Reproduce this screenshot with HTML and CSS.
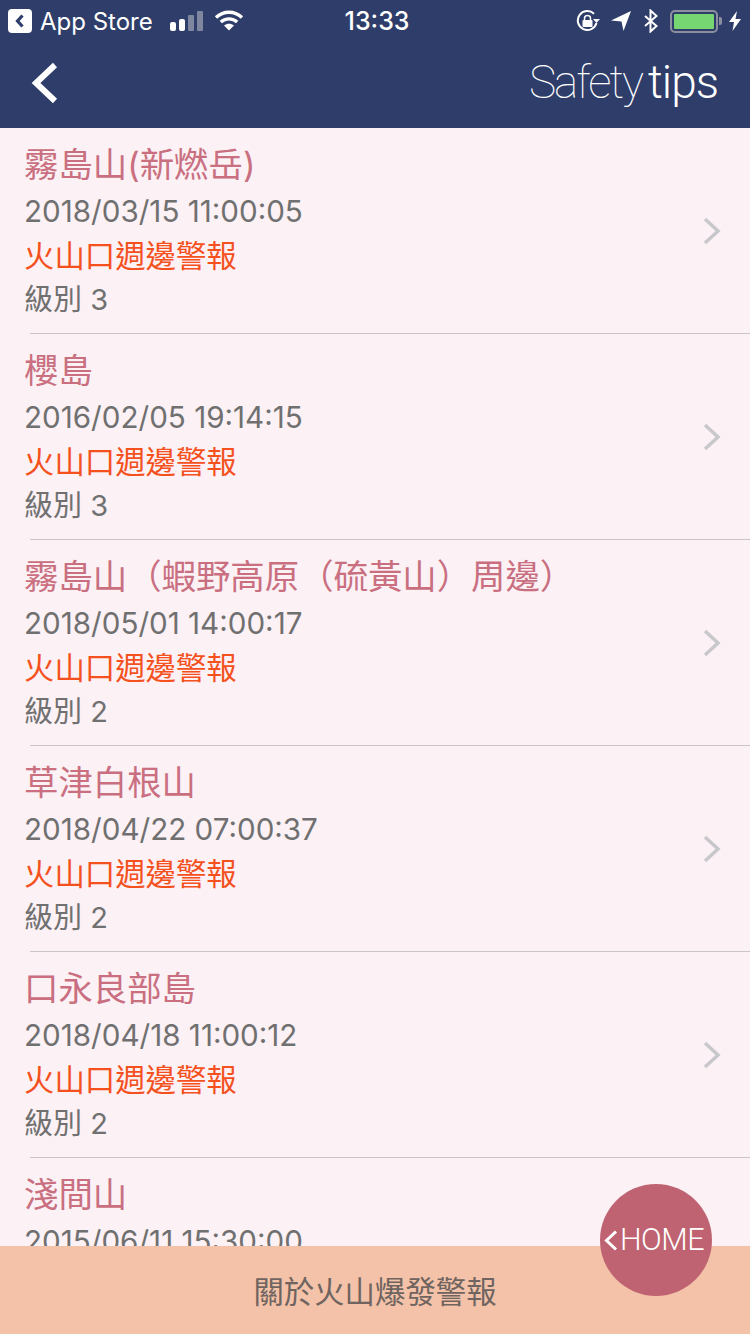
FILE: index.html
```html
<!DOCTYPE html>
<html lang="zh-Hant">
<head>
    <meta charset="UTF-8">
    <meta name="viewport" content="width=device-width, initial-scale=1.0">
    <title>Safety tips</title>
    <link rel="stylesheet" href="styles.css">
</head>
<body>
    <div class="app">
        <header class="top">
            <div class="status-bar">
                <div class="status-left">
                    <svg class="back-app" width="24" height="24" viewBox="0 0 24 24"><rect width="24" height="24" rx="4" fill="#fff"/><path d="M14.500 6.500 9.500 12l5 5.500" fill="none" stroke="#2e3d69" stroke-width="3.200"/></svg>
                    <span class="app-store">App Store</span>
                    <svg class="signal" width="33" height="20" viewBox="0 0 33 20">
                        <rect x="0" y="11" width="6" height="9" rx="2" fill="#fff"/>
                        <rect x="9" y="8" width="6" height="12" rx="2" fill="#fff"/>
                        <rect x="18" y="4" width="6" height="16" rx="1" fill="#7f87a0"/>
                        <rect x="27" y="0" width="6" height="20" rx="1" fill="#7f87a0"/>
                    </svg>
                    <svg class="wifi" width="30" height="22" viewBox="0 0 30 22">
                        <path d="M2 8.500C9.500 1.500 20.500 1.500 28 8.500" fill="none" stroke="#fff" stroke-width="3.400"/>
                        <path d="M6.800 13C11.500 8.800 18.500 8.800 23.200 13" fill="none" stroke="#fff" stroke-width="3.400"/>
                        <path d="M10 16.500C13 14 17 14 20 16.500L15 21.500Z" fill="#fff"/>
                    </svg>
                </div>
                <div class="clock">13:33</div>
                <div class="status-right">
                    <svg class="lock-icon" width="24" height="24" viewBox="0 0 24 24">
                        <path d="M20.500 14A9.500 9.500 0 1 1 18 4.800" fill="none" stroke="#fff" stroke-width="2"/>
                        <path d="M17 10h7l-3.500 4z" fill="#fff"/>
                        <rect x="6.500" y="11" width="10" height="7" rx="1" fill="#fff"/>
                        <path d="M8.500 11.500V9.500a3 3 0 0 1 6 0v2" fill="none" stroke="#fff" stroke-width="1.500"/>
                    </svg>
                    <svg class="arrow-icon" width="20" height="20" viewBox="0 0 20 20"><path d="M0 9.500 20 0 12.500 20 10.500 10.500Z" fill="#fff"/></svg>
                    <svg class="bt-icon" width="16" height="24" viewBox="0 0 16 24"><path d="M2 7 13.500 17 7.500 22.500V1.500L13.500 7 2 17" fill="none" stroke="#fff" stroke-width="2"/></svg>
                    <div class="battery"><div class="battery-fill"></div></div>
                    <div class="battery-tip"></div>
                    <svg class="bolt-icon" width="12" height="20" viewBox="0 0 12 20"><path d="M8 0 0 11h5L3.500 20 12 8H6.500Z" fill="#fff"/></svg>
                </div>
            </div>
            <div class="nav-bar">
                <svg class="nav-back" width="28" height="42" viewBox="0 0 28 42"><path d="M25 3 6 21l19 18" fill="none" stroke="#fff" stroke-width="6"/></svg>
                <div class="nav-title"><span class="thin">Safety</span><span class="light">tips</span></div>
            </div>
        </header>

        <div class="list">
            <div class="row">
                <div class="row-text">
                    <div class="name">霧島山(新燃岳)</div>
                    <div class="date">2018/03/15 11:00:05</div>
                    <div class="alert">火山口週邊警報</div>
                    <div class="level">級別 3</div>
                </div>
                <svg class="chevron" width="20" height="28" viewBox="0 0 20 28"><path d="M3 2l13 12L3 26" fill="none" stroke="#c8c8cc" stroke-width="3.500"/></svg>
            </div>
            <div class="row">
                <div class="row-text">
                    <div class="name">櫻島</div>
                    <div class="date">2016/02/05 19:14:15</div>
                    <div class="alert">火山口週邊警報</div>
                    <div class="level">級別 3</div>
                </div>
                <svg class="chevron" width="20" height="28" viewBox="0 0 20 28"><path d="M3 2l13 12L3 26" fill="none" stroke="#c8c8cc" stroke-width="3.500"/></svg>
            </div>
            <div class="row">
                <div class="row-text">
                    <div class="name">霧島山（蝦野高原（硫黃山）周邊）</div>
                    <div class="date">2018/05/01 14:00:17</div>
                    <div class="alert">火山口週邊警報</div>
                    <div class="level">級別 2</div>
                </div>
                <svg class="chevron" width="20" height="28" viewBox="0 0 20 28"><path d="M3 2l13 12L3 26" fill="none" stroke="#c8c8cc" stroke-width="3.500"/></svg>
            </div>
            <div class="row">
                <div class="row-text">
                    <div class="name">草津白根山</div>
                    <div class="date">2018/04/22 07:00:37</div>
                    <div class="alert">火山口週邊警報</div>
                    <div class="level">級別 2</div>
                </div>
                <svg class="chevron" width="20" height="28" viewBox="0 0 20 28"><path d="M3 2l13 12L3 26" fill="none" stroke="#c8c8cc" stroke-width="3.500"/></svg>
            </div>
            <div class="row">
                <div class="row-text">
                    <div class="name">口永良部島</div>
                    <div class="date">2018/04/18 11:00:12</div>
                    <div class="alert">火山口週邊警報</div>
                    <div class="level">級別 2</div>
                </div>
                <svg class="chevron" width="20" height="28" viewBox="0 0 20 28"><path d="M3 2l13 12L3 26" fill="none" stroke="#c8c8cc" stroke-width="3.500"/></svg>
            </div>
            <div class="row">
                <div class="row-text">
                    <div class="name">淺間山</div>
                    <div class="date">2015/06/11 15:30:00</div>
                </div>
            </div>
        </div>

        <footer class="bottom-bar">關於火山爆發警報</footer>

        <div class="home-btn">
            <svg width="15" height="21" viewBox="0 0 15 21"><path d="M13 1.500 3.500 10.500l9.500 9" fill="none" stroke="#fff" stroke-width="3"/></svg>
            <span>HOME</span>
        </div>
    </div>
</body>
</html>
```

FILE: styles.css
```css
* {
    box-sizing: border-box;
}

html, body {
    margin: 0;
    padding: 0;
}

body {
    font-family: "Inter", "Noto Sans CJK TC", sans-serif;
}

.app {
    position: relative;
    width: 750px;
    height: 1334px;
    display: flex;
    flex-direction: column;
    overflow: hidden;
    background-color: #fcf1f5;
}

/* top bar */
.top {
    height: 128px;
    flex-shrink: 0;
    background-color: #2e3d69;
    color: #fff;
}

.status-bar {
    height: 40px;
    position: relative;
    display: flex;
    align-items: center;
    justify-content: space-between;
    padding: 2px 9px 0 8px;
}

.status-left {
    display: flex;
    align-items: center;
}

.app-store {
    font-size: 24px;
    margin-left: 8px;
}

.signal {
    margin-left: 17px;
}

.wifi {
    margin-left: 11px;
    margin-top: -2px;
}

.clock {
    position: absolute;
    left: 0;
    right: 0;
    top: 6px;
    text-align: center;
    font-size: 25px;
    font-weight: 500;
    padding-left: 4px;
}

.status-right {
    display: flex;
    align-items: center;
}

.arrow-icon {
    margin-left: 11px;
}

.bt-icon {
    margin-left: 12px;
}

.battery {
    width: 48px;
    height: 23px;
    border: 2px solid #8b8f9f;
    border-radius: 5px;
    padding: 2px;
    margin-left: 11px;
}

.battery-fill {
    height: 100%;
    background-color: #76d672;
    border-radius: 1px;
}

.battery-tip {
    width: 3px;
    height: 8px;
    margin-left: 1px;
    background-color: #8b8f9f;
    border-radius: 0 2px 2px 0;
}

.bolt-icon {
    margin-left: 7px;
}

.nav-bar {
    height: 88px;
    display: flex;
    align-items: center;
    justify-content: space-between;
    padding: 0 32px 0 30px;
}

.nav-back {
    margin-top: -2px;
}

.nav-title {
    font-family: "Roboto", sans-serif;
    font-size: 46px;
    margin-top: -5px;
}

.thin {
    font-weight: 100;
    letter-spacing: -2px;
    margin-right: 6px;
}

.light {
    font-weight: 300;
    letter-spacing: -1px;
}

/* list */
.list {
    flex: 1;
    overflow: hidden;
}

.row {
    height: 206px;
    margin-left: 30px;
    display: flex;
    align-items: center;
    justify-content: space-between;
    border-bottom: 1px solid #c9c5c8;
    padding-right: 28px;
}

.row-text {
    align-self: flex-start;
    margin-left: -6px;
    padding-top: 14px;
}

.name {
    font-size: 34.400px;
    line-height: 46px;
    color: #c96f80;
}

.date {
    font-size: 29.600px;
    line-height: 46px;
    color: #707070;
}

.alert {
    font-size: 30.400px;
    line-height: 44px;
    color: #f4511e;
}

.level {
    font-size: 29px;
    line-height: 43px;
    color: #707070;
}

/* bottom */
.bottom-bar {
    height: 88px;
    flex-shrink: 0;
    display: flex;
    align-items: center;
    justify-content: center;
    background-color: #f4c2a8;
    color: #6f6460;
    font-size: 30.400px;
}

.home-btn {
    position: absolute;
    left: 600px;
    top: 1184px;
    width: 112px;
    height: 112px;
    border-radius: 50%;
    background-color: #bf6372;
    color: #fff;
    display: flex;
    align-items: center;
    padding-left: 3px;
}

.home-btn span {
    font-family: "Roboto", sans-serif;
    font-weight: 300;
    font-size: 30.500px;
    margin-left: 2px;
    margin-top: -2px;
    letter-spacing: -0.500px;
}
```
